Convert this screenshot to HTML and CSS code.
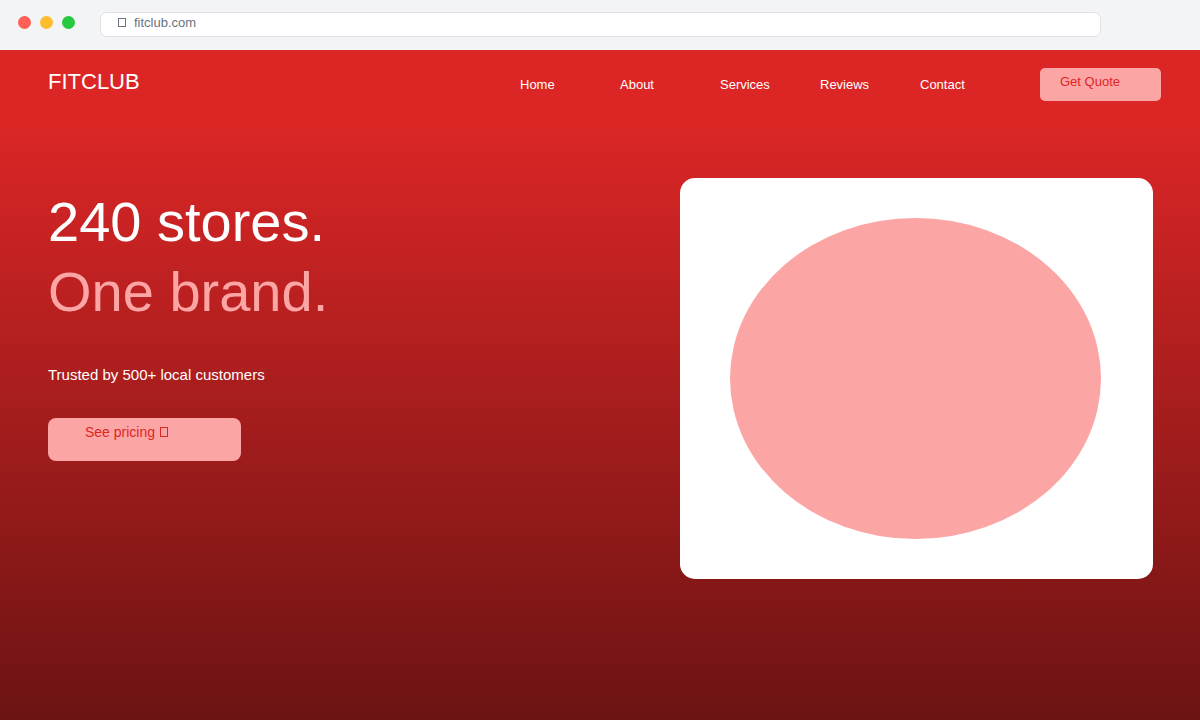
FILE: index.html
```html
<!DOCTYPE html>
<html lang="en">

<head>
  <meta charset="UTF-8" />
  <meta name="viewport" content="width=device-width, initial-scale=1.0" />
  <title>FITCLUB</title>
  <link rel="stylesheet" href="styles.css">
</head>

<body>
  <div class="browser-bar">
    <div class="dots">
      <span class="dot red"></span>
      <span class="dot yellow"></span>
      <span class="dot green"></span>
    </div>
    <div class="address">
      <svg class="box-icon" width="8" height="10" viewBox="0 0 8 10" aria-hidden="true">
        <rect x="0.5" y="0.5" width="7" height="8" fill="none" stroke="currentColor" />
      </svg>
      <input type="text" class="url" aria-label="Address" value="fitclub.com" />
    </div>
  </div>

  <div class="page">
    <header class="header">
      <a href="#" class="logo">FITCLUB</a>
      <nav class="nav">
        <a href="#">Home</a>
        <a href="#">About</a>
        <a href="#">Services</a>
        <a href="#">Reviews</a>
        <a href="#">Contact</a>
      </nav>
      <button type="button" class="quote-button">Get Quote</button>
    </header>

    <main class="hero">
      <div class="hero-text">
        <h1>240 stores.<br /><span class="accent">One brand.</span></h1>
        <p>Trusted by 500+ local customers</p>
        <button type="button" class="cta-button">
          See pricing
          <svg class="box-icon" width="9" height="10" viewBox="0 0 9 10" aria-hidden="true">
            <rect x="1.5" y="0.5" width="7" height="9" fill="none" stroke="currentColor" />
          </svg>
        </button>
      </div>
      <div class="hero-card">
        <div class="hero-shape"></div>
      </div>
    </main>
  </div>
</body>

</html>
```
FILE: styles.css
```css
* {
  box-sizing: border-box;
}

body {
  margin: 0;
  min-height: 100vh;
  display: flex;
  flex-direction: column;
  font-family: "Liberation Sans", Arial, sans-serif;
  font-size: 13px;
  color: #fff;
}

a {
  color: inherit;
  text-decoration: none;
}

button {
  border: none;
  background-color: #fca5a5;
  color: #dc2626;
  font-family: inherit;
  text-align: left;
  cursor: pointer;
}

/* browser bar */
.browser-bar {
  display: flex;
  align-items: flex-start;
  height: 50px;
  padding: 12px 99px 0 18px;
  background-color: #f3f4f6;
}

.dots {
  display: flex;
  gap: 9px;
  width: 82px;
  padding-top: 4px;
}

.dot {
  width: 13px;
  height: 13px;
  border-radius: 50%;
}

.red {
  background-color: #ff5f57;
}

.yellow {
  background-color: #ffbd2e;
}

.green {
  background-color: #28c940;
}

.address {
  flex: 1;
  display: flex;
  align-items: center;
  gap: 8px;
  height: 25px;
  padding: 0 17px 4px;
  background-color: #fff;
  border: 1px solid #e0e0e6;
  border-radius: 7px;
  color: #6b7280;
}

.url {
  flex: 1;
  padding: 0;
  border: none;
  outline: none;
  background: none;
  color: inherit;
  font-family: inherit;
  font-size: 13px;
  line-height: 15px;
}

/* page */
.page {
  flex: 1;
  background: linear-gradient(#dc2626 70px, #6c1313);
}

.header {
  display: flex;
  align-items: center;
  height: 68px;
  padding: 0 39px 0 48px;
}

.logo {
  font-size: 22px;
  line-height: 24px;
  padding-bottom: 4px;
}

.nav {
  display: flex;
  margin-left: auto;
  margin-right: 20px;
}

.nav a {
  width: 100px;
  line-height: 15px;
}

.quote-button {
  width: 121px;
  padding: 6px 20px 12px;
  border-radius: 5px;
  font-size: 13px;
  line-height: 15px;
}

.hero {
  display: grid;
  grid-template-columns: 632fr 473fr;
  align-items: start;
  padding: 60px 47px 60px 48px;
}

.hero-text {
  padding-top: 9px;
}

h1 {
  margin: 0 0 38px;
  font-size: 56px;
  font-weight: normal;
  line-height: 70px;
}

.accent {
  color: #fca5a5;
}

p {
  margin: 0 0 33px;
  font-size: 15px;
  line-height: 20px;
}

.cta-button {
  width: 193px;
  height: 43px;
  padding: 6px 37px 20px;
  border-radius: 8px;
  font-size: 14px;
  line-height: 17px;
}

.hero-card {
  padding: 40px 52px 40px 50px;
  background-color: #fff;
  border-radius: 15px;
}

.hero-shape {
  height: 321px;
  border-radius: 50%;
  background-color: #fca5a5;
}
```
